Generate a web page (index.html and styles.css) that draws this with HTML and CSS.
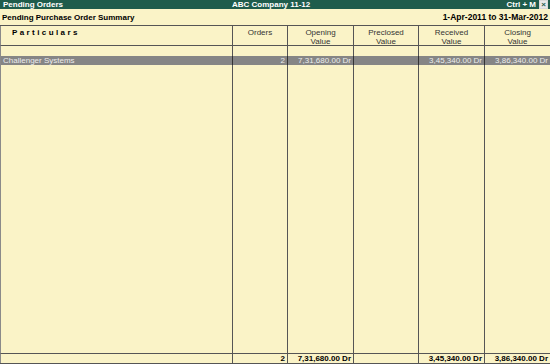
FILE: index.html
```html
<!DOCTYPE html>
<html>
<head>
  <title>Pending Orders</title>
  <link rel="stylesheet" href="styles.css">
</head>
<body>
  <div class="screen">
    <div class="titlebar">
      <span class="title-left">Pending Orders</span>
      <span class="title-mid">ABC Company 11-12</span>
      <span class="title-right">Ctrl + M <span class="closebox">&#215;</span></span>
    </div>
    <div class="subhead">
      <span class="subhead-left">Pending Purchase Order Summary</span>
      <span>1-Apr-2011 to 31-Mar-2012</span>
    </div>

    <div class="sheet">
      <!-- header -->
      <div class="cell head first"><span class="particulars">Particulars</span></div>
      <div class="cell head">Orders</div>
      <div class="cell head">Opening<br>Value</div>
      <div class="cell head">Preclosed<br>Value</div>
      <div class="cell head">Received<br>Value</div>
      <div class="cell head">Closing<br>Value</div>

      <!-- blank row -->
      <div class="cell first"></div>
      <div class="cell"></div>
      <div class="cell"></div>
      <div class="cell"></div>
      <div class="cell"></div>
      <div class="cell"></div>

      <!-- selected row -->
      <div class="cell sel first">Challenger Systems</div>
      <div class="cell sel num">2</div>
      <div class="cell sel num">7,31,680.00 Dr</div>
      <div class="cell sel num"></div>
      <div class="cell sel num">3,45,340.00 Dr</div>
      <div class="cell sel num">3,86,340.00 Dr</div>

      <!-- filler -->
      <div class="cell first"></div>
      <div class="cell"></div>
      <div class="cell"></div>
      <div class="cell"></div>
      <div class="cell"></div>
      <div class="cell"></div>

      <!-- totals -->
      <div class="cell total first"></div>
      <div class="cell total num">2</div>
      <div class="cell total num">7,31,680.00 Dr</div>
      <div class="cell total num"></div>
      <div class="cell total num">3,45,340.00 Dr</div>
      <div class="cell total num">3,86,340.00 Dr</div>
    </div>
  </div>
</body>
</html>
```

FILE: styles.css
```css
body {
  margin: 0;
  padding: 0;
  font-family: "Liberation Sans", Arial, sans-serif;
  background-color: #faf3c7;
}
.screen {
  display: flex;
  flex-direction: column;
  width: 550px;
  height: 364px;
  overflow: hidden;
}
.titlebar {
  display: flex;
  justify-content: space-between;
  align-items: center;
  height: 9px;
  padding: 0 2px 0 3px;
  background-color: #1f5c4c;
  color: #ffffff;
  font-size: 8px;
  font-weight: bold;
  line-height: 9px;
  position: relative;
}
.title-mid {
  position: absolute;
  left: 232px;
}
.title-right {
  display: flex;
  align-items: center;
  gap: 3px;
}
.closebox {
  display: inline-block;
  width: 7px;
  height: 7px;
  border: 1px solid #d8d8d8;
  background-color: #e8e8e8;
  color: #1f5c4c;
  font-size: 8px;
  line-height: 7px;
  text-align: center;
}
.subhead {
  display: flex;
  justify-content: space-between;
  align-items: center;
  height: 16px;
  padding: 0 2px 0 2px;
  font-size: 8.5px;
  font-weight: bold;
  color: #000000;
}
.subhead-left {
  font-size: 8px;
}
.sheet {
  flex: 1;
  display: grid;
  grid-template-columns: 232px 55px 66px 65px 66px 1fr;
  grid-template-rows: 20px 10px 9px 1fr 10px;
  border-top: 1px solid #555555;
  border-bottom: 1px solid #555555;
  font-size: 8px;
  color: #222222;
}
.cell {
  border-left: 1px solid #555555;
  line-height: 9px;
  white-space: nowrap;
  overflow: hidden;
}
.cell.first {
  border-left: 1px solid #8a8a8a;
}
.head {
  text-align: center;
  padding-top: 2px;
  color: #333333;
  border-bottom: 1px solid #555555;
}
.head.first {
  text-align: left;
  padding-left: 11px;
}
.particulars {
  font-weight: bold;
  letter-spacing: 2.4px;
  color: #000000;
}
.num {
  text-align: right;
  padding-right: 2px;
}
.sel {
  background-color: #858585;
  color: #ececec;
  border-left-color: #333333;
}
.sel.first {
  padding-left: 2px;
}
.total {
  border-top: 1px solid #555555;
  font-weight: bold;
  color: #000000;
}
```
